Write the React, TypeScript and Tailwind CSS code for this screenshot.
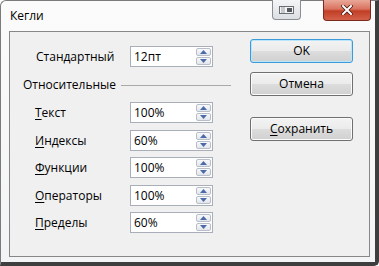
import React from "react";

const font = { fontFamily: '"Open Sans", "Noto Sans", Arial, sans-serif' };

function Spinner() {
  return (
    <div className="flex flex-col gap-[1px] mr-[1px]">
      <div className="w-[15px] h-[8px] border border-[#b8bec8] rounded-[2px] bg-gradient-to-b from-[#f8f9fb] to-[#e2e6ec] flex items-center justify-center">
        <svg width="7" height="4" viewBox="0 0 7 4"><path d="M0 4 L3.5 0 L7 4 Z" fill="#4d69a8" /></svg>
      </div>
      <div className="w-[15px] h-[8px] border border-[#b8bec8] rounded-[2px] bg-gradient-to-b from-[#f8f9fb] to-[#e2e6ec] flex items-center justify-center">
        <svg width="7" height="4" viewBox="0 0 7 4"><path d="M0 0 L3.5 4 L7 0 Z" fill="#4d69a8" /></svg>
      </div>
    </div>
  );
}

function SpinInput({ value }: { value: string }) {
  return (
    <div className="w-[83px] h-[21px] border border-[#a9afb8] bg-white flex items-center justify-between pl-[3px]">
      <span className="text-[12px] leading-[14px] text-black">{value}</span>
      <Spinner />
    </div>
  );
}

function Row({ first, rest, value, mt }: { first: string; rest: string; value: string; mt: string }) {
  return (
    <div className={`flex items-center pl-[12px] ${mt}`}>
      <div className="w-[95px] text-[12px] leading-[14px] text-black">
        <span className="underline underline-offset-[2px]">{first}</span>
        {rest}
      </div>
      <SpinInput value={value} />
    </div>
  );
}

function Btn({ children, def, mt }: { children: React.ReactNode; def?: boolean; mt: string }) {
  return (
    <div
      className={`w-[103px] h-[24px] rounded-[3px] border flex items-center justify-center text-[12px] text-black ${mt} ${
        def
          ? "border-[#3c9ad8] shadow-[inset_0_0_0_1px_#b9e6fb]"
          : "border-[#707070] shadow-[inset_0_0_0_1px_#fbfbfb]"
      } bg-[linear-gradient(#f3f3f3_0%,#ebebeb_50%,#dddddd_50%,#d0d0d0_100%)]`}
    >
      {children}
    </div>
  );
}

export default function App() {
  return (
    <div className="w-[379px] h-[266px] bg-white" style={font}>
      <div className="w-full h-full flex flex-col border-l border-t border-l-[#7b7b7b] border-t-[#7b7b7b] border-r-[4px] border-b-[4px] border-r-[#3e3e3e] border-b-[#3e3e3e] rounded-tl-[6px] rounded-br-[5px] bg-gradient-to-b from-[#fbfbfb] to-[#f3f4f5]">
        <div className="h-[30px] flex items-start pl-[9px] shrink-0">
          <div className="mt-[8px] text-[12px] leading-[14px] text-black">Кегли</div>
          <div className="ml-auto flex items-start mt-[-1px] mr-[4px]">
            <div className="w-[29px] h-[20px] border border-[#8a8e94] border-t-0 rounded-b-[4px] bg-gradient-to-b from-[#f4f5f6] to-[#dcdfe3] flex items-center justify-center">
              <svg width="15" height="8" viewBox="0 0 15 8">
                <rect x="0.5" y="0.5" width="14" height="7" fill="#f4f4f4" stroke="#6b6f75" />
                <line x1="3" y1="1" x2="3" y2="7" stroke="#9a9ea4" />
                <line x1="5" y1="1" x2="5" y2="7" stroke="#9a9ea4" />
                <rect x="8" y="2" width="5" height="4" fill="#55595f" />
              </svg>
            </div>
            <div className="ml-[22px] w-[48px] h-[21px] border border-[#7a2a1e] border-t-0 rounded-b-[4px] bg-[linear-gradient(#e9a898_0%,#d9735f_45%,#c23e26_55%,#d2614a_100%)] flex items-center justify-center">
              <svg width="12" height="10" viewBox="0 0 12 10">
                <path d="M2 1 L10 9 M10 1 L2 9" stroke="#4a1a12" strokeWidth="3.6" strokeLinecap="square" />
                <path d="M2 1 L10 9 M10 1 L2 9" stroke="#ffffff" strokeWidth="2" strokeLinecap="square" />
              </svg>
            </div>
          </div>
        </div>
        <div className="ml-[8px] mr-[5px] mb-[5px] h-[226px] border border-[#878787] bg-[#f0f0f0] flex">
          <div className="w-[221px] pl-[13px] flex flex-col">
            <div className="flex items-center pl-[13px] mt-[14px]">
              <div className="w-[94px] text-[12px] leading-[14px] text-black">Стандартный</div>
              <SpinInput value="12пт" />
            </div>
            <div className="mt-[10px] h-[16px] flex items-center">
              <span className="text-[12px] leading-[14px] text-black">Относительные</span>
              <div className="ml-[5px] flex-1 h-[1px] bg-[#a9a9a9]" />
            </div>
            <Row first="Т" rest="екст" value="100%" mt="mt-[9px]" />
            <Row first="И" rest="ндексы" value="60%" mt="mt-[7px]" />
            <Row first="Ф" rest="ункции" value="100%" mt="mt-[6px]" />
            <Row first="О" rest="ператоры" value="100%" mt="mt-[7px]" />
            <Row first="П" rest="ределы" value="60%" mt="mt-[6px]" />
          </div>
          <div className="ml-[19px] flex flex-col">
            <Btn def mt="mt-[7px]">OK</Btn>
            <Btn mt="mt-[9px]">Отмена</Btn>
            <Btn mt="mt-[21px]">
              <span>
                <span className="underline underline-offset-[2px]">С</span>охранить
              </span>
            </Btn>
          </div>
        </div>
      </div>
    </div>
  );
}
